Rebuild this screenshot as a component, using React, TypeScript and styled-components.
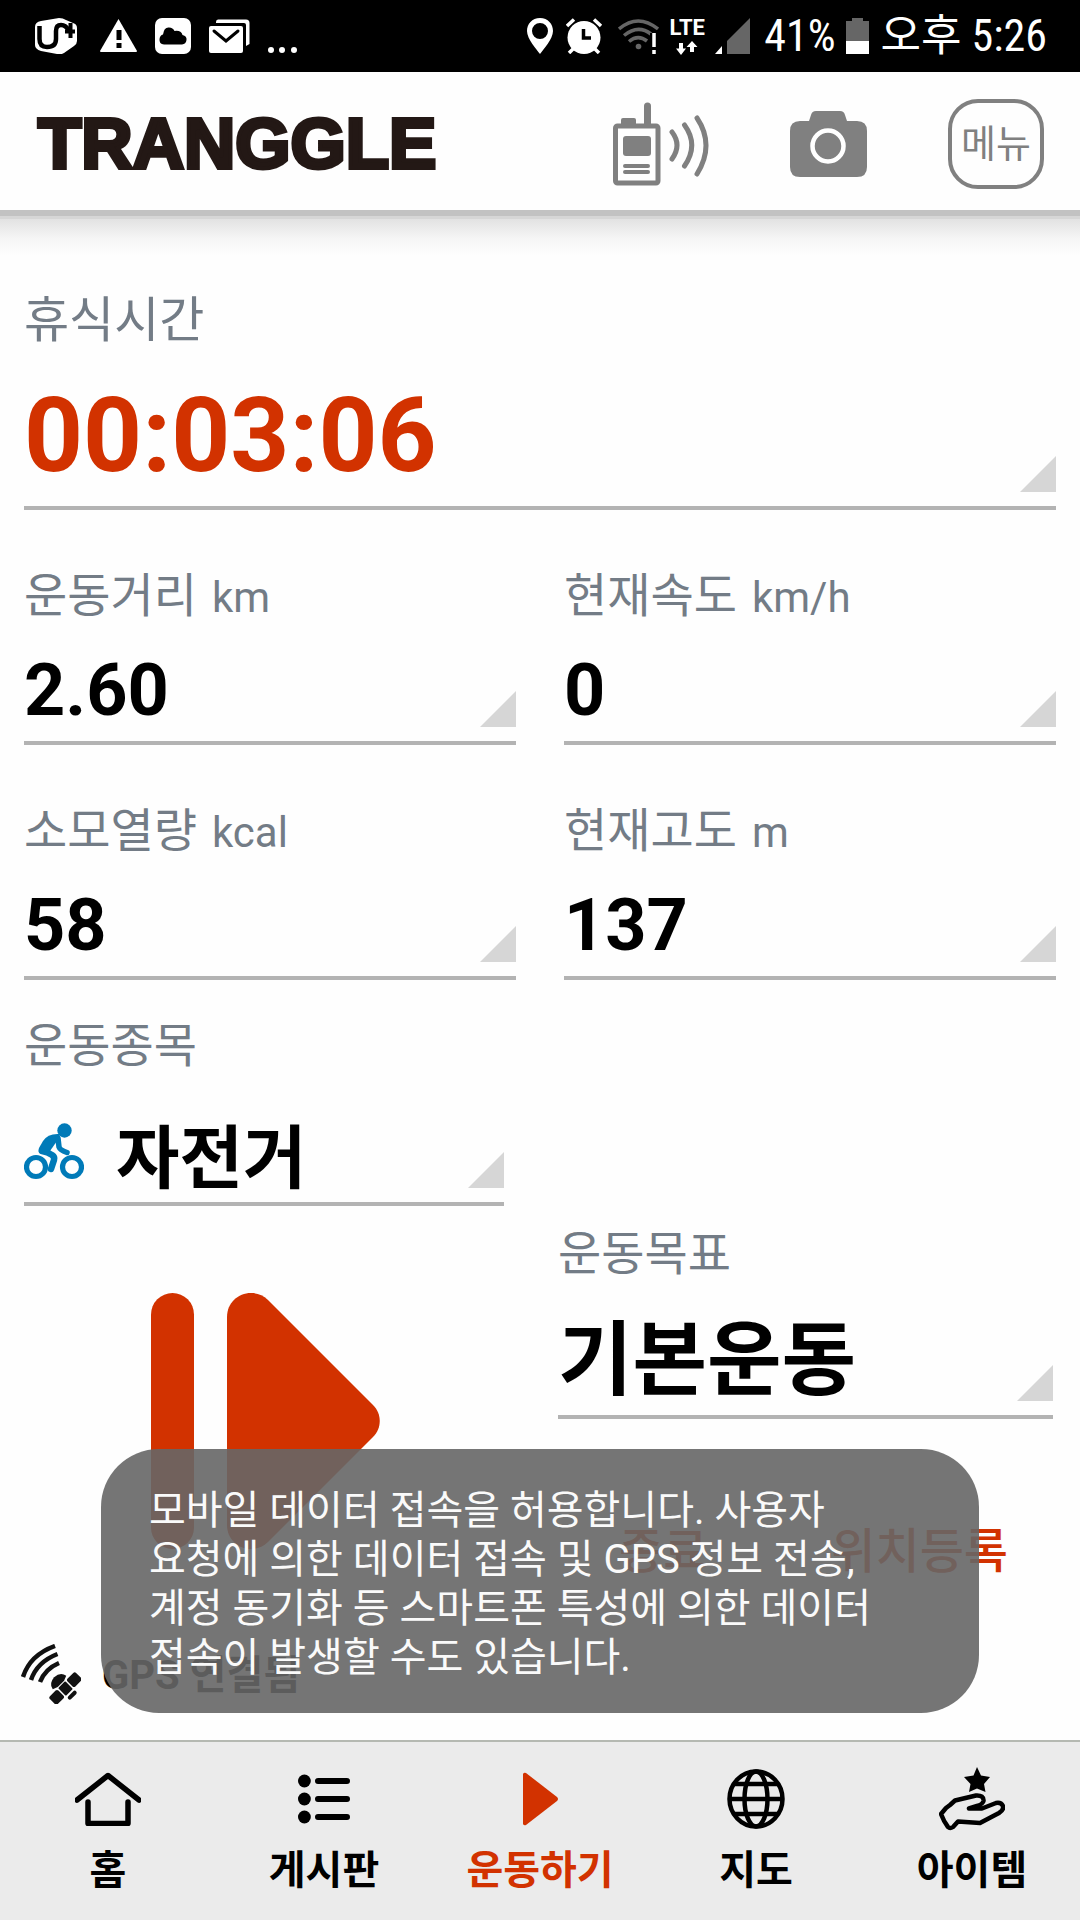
import React from "react";
import styled, { createGlobalStyle } from "styled-components";

const RED = "#d23200";
const LABEL = "#737c86";
const FONT = `Roboto, "Noto Sans CJK KR", sans-serif`;

const GlobalStyle = createGlobalStyle`
  *, *::before, *::after { box-sizing: border-box; }
  body { margin: 0; background: #fefefe; font-family: ${FONT}; color: #000; }
  button { font: inherit; color: inherit; background: none; border: 0; padding: 0; margin: 0; cursor: pointer; }
  svg { display: block; flex: none; }
`;

const Screen = styled.div`
  position: relative;
  display: flex;
  flex-direction: column;
  min-height: 100vh;
`;

/* ---------- status bar ---------- */

const StatusBar = styled.div`
  display: flex;
  justify-content: space-between;
  align-items: center;
  height: 72px;
  padding: 0 33px 0 35px;
  background: #000;
  color: #fff;
`;

const StatusGroup = styled.div<{ $gap: number }>`
  display: flex;
  align-items: center;
  gap: ${(p) => p.$gap}px;
`;

const StatusText = styled.span`
  font-family: "Roboto Condensed", Roboto, "Noto Sans CJK KR", sans-serif;
  font-size: 44px;
  line-height: 48px;
  white-space: nowrap;
`;

const Network = styled.div`
  display: flex;
  flex-direction: column;
  align-items: center;
  gap: 3px;
  width: 40px;
  font-size: 22px;
  font-weight: 700;
  line-height: 20px;
`;

/* ---------- app header ---------- */

const Header = styled.header`
  position: relative;
  display: flex;
  align-items: center;
  justify-content: space-between;
  height: 138px;
  padding: 6px 36px 0 38px;
  background: #fefefe;

  &::after {
    content: "";
    position: absolute;
    left: 0;
    right: 0;
    top: 100%;
    height: 46px;
    background: linear-gradient(#c2c2c2 0 6px, #d6d6d6 6px 9px, #e2e2e2 9px, #f5f5f5 28px, #fefefe 46px);
    pointer-events: none;
  }
`;

const Logo = styled.h1`
  margin: 0;
  font-family: "Liberation Sans", Arial, sans-serif;
  font-size: 71px;
  font-weight: 700;
  line-height: 80px;
  color: #231815;
  -webkit-text-stroke: 4px #231815;
`;

const Tools = styled.div`
  display: flex;
  align-items: center;
  gap: 81px;
  color: #808080;
`;

const MenuButton = styled.button`
  && {
    width: 96px;
    height: 90px;
    border: 4px solid #808080;
    border-radius: 30px;
    font-size: 38px;
    line-height: 48px;
    color: #808080;
    white-space: nowrap;
  }
`;

/* ---------- measurement tiles ---------- */

const Main = styled.main`
  flex: 1;
  padding: 0 24px;
`;

const Tile = styled.button<{ $top: number }>`
  && {
    display: flex;
    flex-direction: column;
    width: 100%;
    padding-top: ${(p) => p.$top}px;
    border-bottom: 4px solid #b3b3b3;
    text-align: left;
  }
`;

const Label = styled.span<{ $large?: boolean }>`
  font-size: ${(p) => (p.$large ? 49 : 47)}px;
  font-weight: 400;
  line-height: 56px;
  color: ${LABEL};
`;

const Unit = styled.span`
  margin-left: 15px;
  font-size: 42px;
  line-height: 1;
`;

const ValueRow = styled.span<{ $gap: number }>`
  display: flex;
  align-items: flex-end;
  padding-bottom: 14px;
  margin-top: ${(p) => p.$gap}px;

  &::after {
    content: "";
    width: 36px;
    height: 36px;
    margin-left: auto;
    background: #d6d6d6;
    clip-path: polygon(100% 0, 100% 100%, 0 100%);
  }
`;

const Value = styled.span<{ $size: number; $line: number; $color?: string }>`
  font-size: ${(p) => p.$size}px;
  font-weight: 700;
  line-height: ${(p) => p.$line}px;
  color: ${(p) => p.$color || "#000"};
`;

const SportIcon = styled.span`
  margin: 0 32px 8px 0;
`;

const StatGrid = styled.div`
  display: grid;
  grid-template-columns: repeat(2, minmax(0, 1fr));
  column-gap: 48px;
`;

const ControlGrid = styled.div`
  display: grid;
  grid-template-columns: minmax(0, 32fr) minmax(0, 33fr);
  column-gap: 54px;
  padding-right: 3px;
`;

const ControlColumn = styled.div`
  display: flex;
  flex-direction: column;
`;

const ResumeButton = styled.button`
  && {
    align-self: center;
    margin-top: 87px;
    padding-left: 4px;
    color: ${RED};
  }
`;

const Actions = styled.div`
  display: flex;
  justify-content: space-between;
  padding: 105px 45px 0 61px;
`;

const TextButton = styled.button`
  && {
    font-size: 48px;
    font-weight: 500;
    line-height: 56px;
    color: ${RED};
    white-space: nowrap;
  }
`;

const GpsStatus = styled.div`
  display: flex;
  align-items: center;
  gap: 21px;
  padding: 0 21px 36px;
`;

const GpsText = styled.span`
  padding-top: 4px;
  font-size: 40px;
  font-weight: 700;
  line-height: 56px;
`;

/* ---------- toast ---------- */

const Toast = styled.div`
  position: absolute;
  left: 50%;
  bottom: 207px;
  transform: translateX(-50%);
  width: max-content;
  max-width: 878px;
  min-width: 878px;
  padding: 37px 48px 31px;
  border-radius: 58px;
  background: rgba(102, 102, 102, 0.9);
  color: #fafafa;
  font-size: 40px;
  line-height: 49px;
  white-space: pre-line;
`;

/* ---------- bottom navigation ---------- */

const Nav = styled.nav`
  display: grid;
  grid-template-columns: repeat(5, minmax(0, 1fr));
  padding: 25px 0;
  border-top: 2px solid #b5b9b2;
  background: #ebebeb;
`;

const NavLink = styled.a<{ $active?: boolean }>`
  display: flex;
  flex-direction: column;
  align-items: center;
  gap: 16px;
  color: ${(p) => (p.$active ? RED : "#000")};
  font-size: 40px;
  font-weight: 700;
  line-height: 48px;
  text-decoration: none;
  white-space: nowrap;
`;

const NavIcon = styled.span`
  display: flex;
  align-items: center;
  justify-content: center;
  height: 64px;
`;

/* ---------- drawings ---------- */

const CarrierIcon = () => (
  <svg width="46" height="36" viewBox="0 0 46 36">
    <path d="M6 3L24 0Q28 0 31 2L38 5Q42 6 42 10V23Q42 26 39 28L29 35Q26 37 22 36L6 33Q0 31 0 27V9Q0 4 6 3Z" fill="#fff" />
    <path d="M4.500 8V21Q4.500 29 12 29Q21 29 21 21V13Q21 7 26 7Q31 7 34 13" fill="none" stroke="#000" strokeWidth="4.500" />
    <path d="M35.500 5V20M30 13.500H40" stroke="#000" strokeWidth="4" />
  </svg>
);

const WarningIcon = () => (
  <svg width="38" height="36" viewBox="-1 0 38 36">
    <path d="M18.500 1L37 33Q37 34 36 34H1Q0 34 0 33Z" fill="#fff" />
    <path d="M19 12V22M19 25V30" stroke="#000" strokeWidth="5" />
  </svg>
);

const CloudIcon = () => (
  <svg width="36" height="36" viewBox="0 0 36 36">
    <rect width="36" height="36" rx="7" fill="#fff" />
    <path d="M9 26.500Q4 26 4.500 21Q5 17 8 16.500Q9 9 14 9.500Q18 9.500 19.500 13Q26 12 27.500 17Q32 18 31.500 22Q31 26 27 26.500Z" fill="#000" />
  </svg>
);

const MailIcon = () => (
  <svg width="41" height="36" viewBox="0 0 41 36">
    <path d="M7 4Q7 1.500 9 1.500H37Q40.500 1.500 40.500 5V26L37 28V7Q37 5 35 5H7Z" fill="#fff" />
    <rect y="8" width="34" height="27" rx="2" fill="#fff" />
    <path d="M5 13L17 23L29 13" fill="none" stroke="#000" strokeWidth="3" strokeLinecap="round" />
  </svg>
);

const MoreIcon = () => (
  <svg width="32" height="36" viewBox="2 0 32 36" fill="#fff">
    <circle cx="5" cy="32" r="3" />
    <circle cx="16" cy="32" r="3" />
    <circle cx="28" cy="32" r="3" />
  </svg>
);

const PinIcon = () => (
  <svg width="31" height="36" viewBox="0 0 31 36">
    <path d="M13 0C5 0 0 6 0 13C0 21 10 32 13 36C16 32 26 21 26 13C26 6 21 0 13 0ZM13 5A8 8 0 1 1 13 21A8 8 0 1 1 13 5Z" fill="#fff" fillRule="evenodd" />
  </svg>
);

const AlarmIcon = () => (
  <svg width="44" height="36" viewBox="0 0 44 36">
    <circle cx="18" cy="19.500" r="16.500" fill="#fff" />
    <path d="M1 8L8 1.500M28 1.500L35 8M7 31L3 35M29 31L33 35" stroke="#fff" strokeWidth="3.500" />
    <path d="M17.500 11V20H25" fill="none" stroke="#000" strokeWidth="3.500" />
  </svg>
);

const WifiIcon = () => (
  <svg width="41" height="36" viewBox="0 0 41 36">
    <g fill="none" stroke="#666" strokeWidth="3.500">
      <path d="M1 11Q20 -5 40 11" />
      <path d="M6 17.500Q20 6 33 16" />
      <path d="M11 23.500Q20 16 29 23" />
    </g>
    <circle cx="20.500" cy="28.500" r="2.800" fill="#666" />
    <path d="M36 15V29" stroke="#000" strokeWidth="8" />
    <path d="M36 15V29M36 32V36" stroke="#fff" strokeWidth="3.500" />
  </svg>
);

const DataArrows = () => (
  <svg width="24" height="14" viewBox="0 0 24 14" fill="#fff">
    <path d="M4 2H8V7.500H11L6 14L1 7.500H4Z" />
    <path d="M17 0L22.500 6H19V11H15V6H11.500Z" />
  </svg>
);

const SignalIcon = () => (
  <svg width="41" height="36" viewBox="0 0 41 36">
    <path d="M7 28V36H0Z" fill="#fff" />
    <path d="M35 0V36H12V23Z" fill="#666" />
  </svg>
);

const BatteryIcon = () => (
  <svg width="29" height="36" viewBox="0 0 29 36">
    <path d="M8 0H19V3H25V23H2V3H8Z" fill="#666" />
    <rect x="2" y="23" width="23" height="13" fill="#fff" />
  </svg>
);

const RadioIcon = () => (
  <svg width="96" height="84" viewBox="0 0 96 84" fill="none" stroke="currentColor">
    <path d="M34.500 4V22" strokeWidth="7" strokeLinecap="round" />
    <path d="M8 22V18Q8 16 10 16H21Q23 16 23 18V22Z" fill="currentColor" stroke="none" />
    <rect x="2.500" y="24" width="42.500" height="57" rx="2" strokeWidth="5" />
    <rect x="10" y="34" width="28" height="20" rx="3" fill="currentColor" stroke="none" />
    <path d="M12 64H35M12 70H35" strokeWidth="4" strokeLinecap="round" />
    <path d="M59 30Q69 43 59 57M71.500 23Q86 43 71.500 64M84 16Q102 43 84 72" strokeWidth="5" strokeLinecap="round" />
  </svg>
);

const CameraIcon = () => (
  <svg width="77" height="66" viewBox="0 0 77 66">
    <path d="M10 10H19L21 4Q22 0 26 0H50Q54 0 55 4L57 10H67Q77 10 77 20V56Q77 66 67 66H10Q0 66 0 56V20Q0 10 10 10Z" fill="currentColor" />
    <circle cx="38" cy="35" r="15.500" fill="none" stroke="#fff" strokeWidth="4.500" />
  </svg>
);

const BikeIcon = () => (
  <svg width="60" height="57" viewBox="0 0 60 57" fill="none" stroke="#007ab8">
    <circle cx="12" cy="44" r="9.500" strokeWidth="5.200" />
    <circle cx="48" cy="44" r="9.500" strokeWidth="5.200" />
    <circle cx="40.500" cy="7.500" r="7.200" fill="#007ab8" stroke="none" />
    <path d="M36 11Q24 10 19 18L15 25Q13 30 18 31L26 28L33 18Z" fill="#007ab8" stroke="none" />
    <path d="M18 28Q24 29 28 32Q31 34 30 37L27 46" strokeWidth="6.500" strokeLinecap="round" strokeLinejoin="round" />
    <path d="M34 15L35 24Q36 27 43 29.500" strokeWidth="5.500" strokeLinecap="round" strokeLinejoin="round" />
  </svg>
);

const ResumeIcon = () => (
  <svg width="230" height="256" viewBox="0 0 230 256" fill="currentColor">
    <rect width="43" height="256" rx="21.500" />
    <path d="M76 24C76 10 87 0 100 0C106 0 112 2 117 7L222 112C231 121 231 135 222 144L117 249C112 254 106 256 100 256C87 256 76 246 76 232Z" />
  </svg>
);

const SatelliteIcon = () => (
  <svg width="60" height="60" viewBox="0 0 60 60" fill="none" stroke="#111">
    <path d="M2 33Q9 11 34 2M10 36Q16 18 36.500 10M19 38Q24 25 38 19" strokeWidth="4.500" />
    <g transform="rotate(-45 44.500 44.500)" fill="#111" stroke="none">
      <rect x="39.500" y="39" width="10" height="11" rx="1" />
      <rect x="26" y="39" width="12" height="11" rx="2" />
      <rect x="51" y="39" width="12" height="11" rx="2" />
      <path d="M35 36Q36 29 44.500 28.500Q53 29 54 36L49 38H40Z" />
      <rect x="39" y="52" width="11" height="4" rx="2" />
    </g>
  </svg>
);

const HomeIcon = () => (
  <svg width="66" height="54" viewBox="0 0 66 54" fill="none" stroke="currentColor" strokeWidth="5.500" strokeLinecap="round" strokeLinejoin="round">
    <path d="M2 28L33 3.500L64 28M13 30V51.500H53V30" />
  </svg>
);

const ListIcon = () => (
  <svg width="52" height="50" viewBox="0 0 52 50" fill="currentColor">
    <path d="M20 7H49M20 25H49M20 43H49" stroke="currentColor" strokeWidth="6" strokeLinecap="round" />
    <circle cx="6.400" cy="7" r="6.400" />
    <circle cx="6.400" cy="25" r="6.400" />
    <circle cx="6.400" cy="43" r="6.400" />
  </svg>
);

const PlayIcon = () => (
  <svg width="36" height="54" viewBox="-1 0 36 54" fill="currentColor">
    <path d="M0 2Q1 0 3 1L34 25Q36 27 34 29L3 53Q1 54 0 52Z" />
  </svg>
);

const GlobeIcon = () => (
  <svg width="58" height="60" viewBox="0 0 58 60" fill="none" stroke="currentColor" strokeWidth="4.500">
    <ellipse cx="29" cy="30" rx="26.500" ry="27.500" />
    <ellipse cx="29" cy="30" rx="11.500" ry="27.500" />
    <path d="M7 15H51M2 30H56M7 45H51" />
  </svg>
);

const HandStarIcon = () => (
  <svg width="66" height="64" viewBox="0 0 66 64">
    <path d="M38 0L42 8.500L51 10L45 17L46.500 25L38 21.500L30 25L31.500 17L25 10L34.500 8.500Z" fill="currentColor" />
    <path d="M2 47L7 41L11 38L16 33.500L37 28.500Q45 28 44.500 34Q44 37 38 39L30 41.500H43L57 36Q62 35 64 39Q65 43 60 46L41 56L19 54.500L14 60Q11 62 9 60Q5 55 2 47Z" fill="none" stroke="currentColor" strokeWidth="4.500" strokeLinejoin="round" />
  </svg>
);

/* ---------- data ---------- */

const stats = [
  { label: "운동거리", unit: "km", value: "2.60" },
  { label: "현재속도", unit: "km/h", value: "0" },
  { label: "소모열량", unit: "kcal", value: "58" },
  { label: "현재고도", unit: "m", value: "137" },
];

const tabs = [
  { label: "홈", icon: <HomeIcon /> },
  { label: "게시판", icon: <ListIcon /> },
  { label: "운동하기", icon: <PlayIcon />, active: true },
  { label: "지도", icon: <GlobeIcon /> },
  { label: "아이템", icon: <HandStarIcon /> },
];

const toastText = `모바일 데이터 접속을 허용합니다. 사용자
요청에 의한 데이터 접속 및 GPS 정보 전송,
계정 동기화 등 스마트폰 특성에 의한 데이터
접속이 발생할 수도 있습니다.`;

export default function App() {
  return (
    <Screen>
      <GlobalStyle />
      <StatusBar>
        <StatusGroup $gap={18}>
          <CarrierIcon />
          <WarningIcon />
          <CloudIcon />
          <MailIcon />
          <MoreIcon />
        </StatusGroup>
        <StatusGroup $gap={8}>
          <PinIcon />
          <AlarmIcon />
          <WifiIcon />
          <Network>
            LTE
            <DataArrows />
          </Network>
          <SignalIcon />
          <StatusText>41%</StatusText>
          <BatteryIcon />
          <StatusText>오후 5:26</StatusText>
        </StatusGroup>
      </StatusBar>

      <Header>
        <Logo>TRANGGLE</Logo>
        <Tools>
          <button type="button" aria-label="무전기">
            <RadioIcon />
          </button>
          <button type="button" aria-label="카메라">
            <CameraIcon />
          </button>
          <MenuButton type="button">메뉴</MenuButton>
        </Tools>
      </Header>

      <Main>
        <Tile type="button" $top={83}>
          <Label $large>휴식시간</Label>
          <ValueRow $gap={31}>
            <Value $size={103} $line={112} $color={RED}>
              00:03:06
            </Value>
          </ValueRow>
        </Tile>

        <StatGrid>
          {stats.map((s) => (
            <Tile type="button" key={s.label} $top={58}>
              <Label>
                {s.label}
                <Unit>{s.unit}</Unit>
              </Label>
              <ValueRow $gap={31}>
                <Value $size={72} $line={72}>
                  {s.value}
                </Value>
              </ValueRow>
            </Tile>
          ))}
        </StatGrid>

        <ControlGrid>
          <ControlColumn>
            <Tile type="button" $top={38}>
              <Label>운동종목</Label>
              <ValueRow $gap={49}>
                <SportIcon>
                  <BikeIcon />
                </SportIcon>
                <Value $size={69} $line={56}>
                  자전거
                </Value>
              </ValueRow>
            </Tile>
            <ResumeButton type="button" aria-label="운동 재개">
              <ResumeIcon />
            </ResumeButton>
          </ControlColumn>
          <ControlColumn>
            <Tile type="button" $top={246}>
              <Label>운동목표</Label>
              <ValueRow $gap={39}>
                <Value $size={81} $line={80}>
                  기본운동
                </Value>
              </ValueRow>
            </Tile>
            <Actions>
              <TextButton type="button">종료</TextButton>
              <TextButton type="button">위치등록</TextButton>
            </Actions>
          </ControlColumn>
        </ControlGrid>
      </Main>

      <GpsStatus>
        <SatelliteIcon />
        <GpsText>GPS 연결됨</GpsText>
      </GpsStatus>

      <Nav>
        {tabs.map((t) => (
          <NavLink key={t.label} href="#" $active={t.active} aria-current={t.active ? "page" : undefined}>
            <NavIcon>{t.icon}</NavIcon>
            {t.label}
          </NavLink>
        ))}
      </Nav>

      <Toast role="status">{toastText}</Toast>
    </Screen>
  );
}
